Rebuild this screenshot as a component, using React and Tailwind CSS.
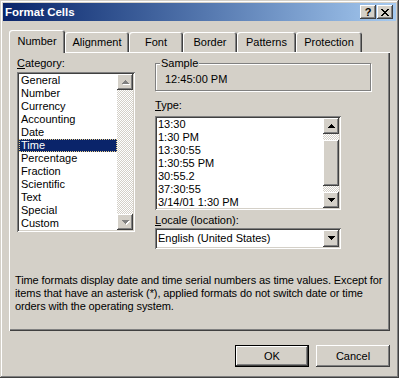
import React from "react";

const raised =
  "shadow-[inset_-1px_-1px_#404040,inset_1px_1px_#ffffff,inset_-2px_-2px_#808080,inset_2px_2px_#d4d0c8]";
const sunken =
  "shadow-[inset_1px_1px_#808080,inset_-1px_-1px_#ffffff,inset_2px_2px_#404040,inset_-2px_-2px_#d4d0c8]";
const dither =
  "bg-[image:repeating-conic-gradient(#ffffff_0%_25%,#d4d0c8_0%_50%)] bg-[length:2px_2px]";

const categories = [
  "General",
  "Number",
  "Currency",
  "Accounting",
  "Date",
  "Time",
  "Percentage",
  "Fraction",
  "Scientific",
  "Text",
  "Special",
  "Custom",
];

const types = [
  "13:30",
  "1:30 PM",
  "13:30:55",
  "1:30:55 PM",
  "30:55.2",
  "37:30:55",
  "3/14/01 1:30 PM",
];

const tabs = [
  { label: "Number", w: "w-[56px]" },
  { label: "Alignment", w: "w-[64px]" },
  { label: "Font", w: "w-[54px]" },
  { label: "Border", w: "w-[54px]" },
  { label: "Patterns", w: "w-[59px]" },
  { label: "Protection", w: "w-[66px]" },
];

// little pixel triangle used on scroll and combo buttons
const Arrow = ({ down, disabled }) => {
  const d = down
    ? "M0 0h7v1H0zM1 1h5v1H1zM2 2h3v1H2zM3 3h1v1H3z"
    : "M3 0h1v1H3zM2 1h3v1H2zM1 2h5v1H1zM0 3h7v1H0z";
  return (
    <svg width="8" height="5" shapeRendering="crispEdges">
      {disabled && <path d={d} fill="#ffffff" transform="translate(1 1)" />}
      <path d={d} fill={disabled ? "#808080" : "#000000"} />
    </svg>
  );
};

const ArrowButton = ({ down, disabled, h = "h-[16px]" }) => (
  <div
    className={`w-[16px] ${h} shrink-0 bg-[#d4d0c8] ${raised} flex items-center justify-center pl-[1px]`}
  >
    <Arrow down={down} disabled={disabled} />
  </div>
);

const Ul = ({ children }) => <span className="underline underline-offset-[1px]">{children}</span>;

const App = () => {
  return (
    <div
      className={`w-[399px] h-[378px] bg-[#d4d0c8] p-[3px] flex flex-col font-['Liberation_Sans',Arial,sans-serif] text-[11px] leading-[13px] text-black select-none shadow-[inset_-1px_-1px_#404040,inset_1px_1px_#d4d0c8,inset_-2px_-2px_#808080,inset_2px_2px_#ffffff]`}
    >
      {/* title bar */}
      <div className="h-[18px] flex items-center pl-[2px] pr-[3px] bg-linear-to-r from-[#0a246a] to-[#a6caf0]">
        <span className="text-white font-bold text-[11.5px]">Format Cells</span>
        <div className="ml-auto flex gap-[1px]">
          <div className={`w-[16px] h-[14px] bg-[#d4d0c8] ${raised} flex items-center justify-center font-bold text-[11px] leading-[11px]`}>
            ?
          </div>
          <div className={`w-[16px] h-[14px] bg-[#d4d0c8] ${raised} flex items-center justify-center`}>
            <svg width="8" height="7" shapeRendering="crispEdges">
              <path
                d="M0 0h2v1H0zM6 0h2v1H6zM1 1h2v1H1zM5 1h2v1H5zM2 2h4v1H2zM3 3h2v1H3zM2 4h4v1H2zM1 5h2v1H1zM5 5h2v1H5zM0 6h2v1H0zM6 6h2v1H6z"
                fill="#000"
              />
            </svg>
          </div>
        </div>
      </div>

      {/* tabs */}
      <div className="mt-[9px] ml-[6px] h-[22px] flex items-start">
        {tabs.map((t, i) =>
          i === 0 ? (
            <div
              key={t.label}
              className={`${t.w} h-[23px] relative z-10 bg-[#d4d0c8] rounded-t-[3px] shadow-[inset_1px_1px_#ffffff,inset_-1px_0_#404040,inset_-2px_0_#808080] flex items-center justify-center pb-[1px]`}
            >
              {t.label}
            </div>
          ) : (
            <div
              key={t.label}
              className={`${t.w} h-[20px] mt-[2px] bg-[#d4d0c8] rounded-t-[3px] shadow-[inset_1px_1px_#ffffff,inset_-1px_0_#404040,inset_-2px_0_#808080] flex items-center justify-center`}
            >
              {t.label}
            </div>
          )
        )}
      </div>

      {/* panel */}
      <div className="ml-[6px] w-[381px] h-[279px] bg-[#d4d0c8] shadow-[inset_1px_1px_#ffffff,inset_-1px_-1px_#404040,inset_-2px_-2px_#808080] pt-[5px] flex flex-col">
        <div className="flex pl-[8px]">
          {/* category */}
          <div className="w-[118px]">
            <div className="h-[13px]">
              <Ul>C</Ul>ategory:
            </div>
            <div className={`mt-[2px] h-[160px] bg-white ${sunken} p-[2px] flex`}>
              <div className="flex-1 flex flex-col">
                {categories.map((c) =>
                  c === "Time" ? (
                    <div
                      key={c}
                      className="h-[13px] bg-[#0a246a] text-white pl-[1px] border border-dotted border-[#e8cf8a] leading-[11px]"
                    >
                      {c}
                    </div>
                  ) : (
                    <div key={c} className="h-[13px] pl-[2px]">
                      {c}
                    </div>
                  )
                )}
              </div>
              <div className={`w-[16px] flex flex-col ${dither}`}>
                <ArrowButton disabled />
                <div className="flex-1" />
                <ArrowButton down disabled />
              </div>
            </div>
          </div>

          {/* right column */}
          <div className="ml-[20px] w-[216px]">
            <div className="mt-[6px] h-[28px] relative border border-[#808080] shadow-[inset_1px_1px_#ffffff,1px_1px_#ffffff] pl-[9px] pt-[9px]">
              <span className="absolute -top-[7px] left-[4px] px-[1px] bg-[#d4d0c8]">Sample</span>
              12:45:00 PM
            </div>

            <div className="mt-[8px] h-[13px]">
              <Ul>T</Ul>ype:
            </div>
            <div className={`mt-[4px] w-[186px] h-[94px] bg-white ${sunken} p-[2px] flex`}>
              <div className="flex-1 flex flex-col overflow-hidden">
                {types.map((t) => (
                  <div key={t} className="h-[13px] shrink-0 pl-[1px]">
                    {t}
                  </div>
                ))}
              </div>
              <div className="w-[16px] flex flex-col">
                <ArrowButton />
                <div className={`h-[6px] ${dither}`} />
                <div className={`h-[46px] bg-[#d4d0c8] ${raised}`} />
                <div className={`flex-1 ${dither}`} />
                <ArrowButton down />
              </div>
            </div>

            <div className="mt-[4px] h-[13px]">
              <Ul>L</Ul>ocale (location):
            </div>
            <div className={`mt-[1px] w-[186px] h-[21px] bg-white ${sunken} p-[2px] flex items-center`}>
              <span className="flex-1 pl-[1px]">English (United States)</span>
              <ArrowButton down h="h-[17px]" />
            </div>
          </div>
        </div>

        <p className="mt-[25px] pl-[6px] whitespace-nowrap tracking-[-0.1px]">
          Time formats display date and time serial numbers as time values. Except for
          <br />
          items that have an asterisk (*), applied formats do not switch date or time
          <br />
          orders with the operating system.
        </p>
      </div>

      {/* buttons */}
      <div className="mt-[14px] flex justify-end gap-[7px] pr-[6px]">
        <button className="w-[74px] h-[22px] bg-[#d4d0c8] shadow-[inset_0_0_0_1px_#000000,inset_-2px_-2px_#404040,inset_2px_2px_#ffffff,inset_-3px_-3px_#808080]">
          OK
        </button>
        <button className={`w-[74px] h-[22px] bg-[#d4d0c8] ${raised}`}>Cancel</button>
      </div>
    </div>
  );
};

export default App;
